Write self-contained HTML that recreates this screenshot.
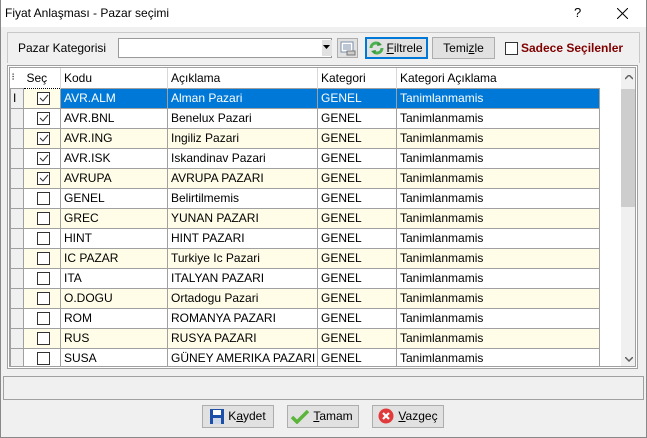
<!DOCTYPE html><html><head><meta charset="utf-8"><style>
*{box-sizing:border-box;margin:0;padding:0}
body{width:647px;height:438px;background:#f0f0f0;font-family:"Liberation Sans",Arial,sans-serif;font-size:12px;color:#000;position:relative;overflow:hidden}
.a{position:absolute}
.win{left:0;top:0;width:647px;height:438px;border:1px solid #888;border-top:none}
.title{left:1px;top:0;width:645px;height:27px;background:#fff}
.btn{background:#e1e1e1;border:1px solid #adadad;text-align:center;line-height:20px;font-size:12px}
.cb{width:13px;height:13px;border:1px solid #333;background:#fff}
table{border-collapse:collapse;table-layout:fixed}
td{height:20px;border:1px solid #a0a0a0;padding:0 3px;white-space:nowrap;overflow:hidden;font-size:12px}
tr.y td{background:#fffde8}
tr.w td{background:#fff}
td.ind{background:#f0f0f0!important}
tr.sel td{background:#0078d7;color:#fff}
</style></head><body>
<div class="a title"></div>
<div class="a" style="left:5px;top:6px;font-size:12px">Fiyat Anlaşması - Pazar seçimi</div>
<div class="a" style="left:574px;top:5px;font-size:13px">?</div>
<svg class="a" style="left:617px;top:8px" width="11" height="11"><path d="M0 0L11 11M11 0L0 11" stroke="#000" stroke-width="1"/></svg>
<div class="a win"></div>
<div class="a" style="left:7px;top:32px;width:633px;height:31px;border:1px solid #c8c8c8;border-bottom:none"></div>
<div class="a" style="left:18px;top:41px">Pazar Kategorisi</div>
<div class="a" style="left:118px;top:38px;width:214px;height:20px;background:#fff;border:1px solid #999"></div>
<div class="a" style="left:322px;top:40px;width:10px;height:16px;background:#e1e1e1"></div>
<svg class="a" style="left:323px;top:45px" width="8" height="5"><path d="M0 0H7L3.5 4Z" fill="#000"/></svg>
<div class="a" style="left:337px;top:38px;width:21px;height:20px;background:#e1e1e1;border:1px solid #adadad"></div>
<svg class="a" style="left:340px;top:41px" width="16" height="15"><rect x="1" y="1" width="12" height="10" fill="#fff" stroke="#7a8ea8"/><path d="M3 4h8M3 6h8M3 8h8" stroke="#7a8ea8"/><rect x="7" y="10" width="8" height="4" fill="#ccc" stroke="#777"/></svg>
<div class="a btn" style="left:365px;top:37px;width:63px;height:22px;border:2px solid #0078d7;line-height:18px;padding-left:16px">
<u>F</u>iltrele</div>
<svg class="a" style="left:368px;top:40px" width="17" height="16"><path d="M3 8a5 5 0 0 1 9-3" stroke="#4caf50" stroke-width="3" fill="none"/><path d="M14 8a5 5 0 0 1-9 3" stroke="#4caf50" stroke-width="3" fill="none"/><path d="M10 2l4 3-5 1z" fill="#3b9a3f"/><path d="M7 14l-4-3 5-1z" fill="#3b9a3f"/></svg>
<div class="a btn" style="left:432px;top:37px;width:63px;height:22px">Temi<u>z</u>le</div>
<div class="a cb" style="left:505px;top:42px;width:13px;height:13px"></div>
<div class="a" style="left:521px;top:41px;font-weight:bold;color:#800000">Sadece Seçilenler</div>

<div class="a" style="left:7px;top:65px;width:631px;height:304px;border:1px solid #a0a0a0;background:#fff;padding:1px">
<div style="border:1px solid #a0a0a0;width:627px;height:300px;position:relative;overflow:hidden">
<table style="width:589px">
<colgroup><col style="width:13px"><col style="width:37px"><col style="width:107px"><col style="width:150px"><col style="width:79px"><col style="width:203px"></colgroup>
<tr class="w"><td class="ind" style="background:#fff!important;border:none;padding:0 0 0 1px;font-size:10px">⁝</td><td style="border:none;border-right:1px solid #d8d8d8">Seç</td><td style="border:none;border-right:1px solid #d8d8d8">Kodu</td><td style="border:none;border-right:1px solid #d8d8d8">Açıklama</td><td style="border:none;border-right:1px solid #d8d8d8">Kategori</td><td style="border:none">Kategori Açıklama</td></tr>
<tr class="sel"><td class="ind" style="color:#000;padding:0 2px">I</td><td style="background:#fffde8;border:1px dotted #000"><div class="cb" style="margin-left:10px"><svg width="11" height="11" style="display:block"><path d="M2 5l3 3 5-6" stroke="#333" fill="none"/></svg></div></td><td>AVR.ALM</td><td>Alman Pazari</td><td>GENEL</td><td>Tanimlanmamis</td></tr>
<tr class="w"><td class="ind"></td><td><div class="cb" style="margin-left:10px"><svg width="11" height="11" style="display:block"><path d="M2 5l3 3 5-6" stroke="#333" fill="none"/></svg></div></td><td>AVR.BNL</td><td>Benelux Pazari</td><td>GENEL</td><td>Tanimlanmamis</td></tr>
<tr class="y"><td class="ind"></td><td><div class="cb" style="margin-left:10px"><svg width="11" height="11" style="display:block"><path d="M2 5l3 3 5-6" stroke="#333" fill="none"/></svg></div></td><td>AVR.ING</td><td>Ingiliz Pazari</td><td>GENEL</td><td>Tanimlanmamis</td></tr>
<tr class="w"><td class="ind"></td><td><div class="cb" style="margin-left:10px"><svg width="11" height="11" style="display:block"><path d="M2 5l3 3 5-6" stroke="#333" fill="none"/></svg></div></td><td>AVR.ISK</td><td>Iskandinav Pazari</td><td>GENEL</td><td>Tanimlanmamis</td></tr>
<tr class="y"><td class="ind"></td><td><div class="cb" style="margin-left:10px"><svg width="11" height="11" style="display:block"><path d="M2 5l3 3 5-6" stroke="#333" fill="none"/></svg></div></td><td>AVRUPA</td><td>AVRUPA PAZARI</td><td>GENEL</td><td>Tanimlanmamis</td></tr>
<tr class="w"><td class="ind"></td><td><div class="cb" style="margin-left:10px"></div></td><td>GENEL</td><td>Belirtilmemis</td><td>GENEL</td><td>Tanimlanmamis</td></tr>
<tr class="y"><td class="ind"></td><td><div class="cb" style="margin-left:10px"></div></td><td>GREC</td><td>YUNAN PAZARI</td><td>GENEL</td><td>Tanimlanmamis</td></tr>
<tr class="w"><td class="ind"></td><td><div class="cb" style="margin-left:10px"></div></td><td>HINT</td><td>HINT PAZARI</td><td>GENEL</td><td>Tanimlanmamis</td></tr>
<tr class="y"><td class="ind"></td><td><div class="cb" style="margin-left:10px"></div></td><td>IC PAZAR</td><td>Turkiye Ic Pazari</td><td>GENEL</td><td>Tanimlanmamis</td></tr>
<tr class="w"><td class="ind"></td><td><div class="cb" style="margin-left:10px"></div></td><td>ITA</td><td>ITALYAN PAZARI</td><td>GENEL</td><td>Tanimlanmamis</td></tr>
<tr class="y"><td class="ind"></td><td><div class="cb" style="margin-left:10px"></div></td><td>O.DOGU</td><td>Ortadogu Pazari</td><td>GENEL</td><td>Tanimlanmamis</td></tr>
<tr class="w"><td class="ind"></td><td><div class="cb" style="margin-left:10px"></div></td><td>ROM</td><td>ROMANYA PAZARI</td><td>GENEL</td><td>Tanimlanmamis</td></tr>
<tr class="y"><td class="ind"></td><td><div class="cb" style="margin-left:10px"></div></td><td>RUS</td><td>RUSYA PAZARI</td><td>GENEL</td><td>Tanimlanmamis</td></tr>
<tr class="w"><td class="ind"></td><td><div class="cb" style="margin-left:10px"></div></td><td>SUSA</td><td>GÜNEY AMERIKA PAZARI</td><td>GENEL</td><td>Tanimlanmamis</td></tr>
</table>
<div class="a" style="left:611px;top:0;width:16px;height:300px;background:#f0f0f0"></div>
<div class="a" style="left:611px;top:21px;width:16px;height:118px;background:#cdcdcd"></div>
<svg class="a" style="left:615px;top:7px" width="8" height="5"><path d="M0 4L4 0L8 4" stroke="#606060" fill="none" stroke-width="1.5"/></svg>
<svg class="a" style="left:615px;top:289px" width="8" height="5"><path d="M0 0L4 4L8 0" stroke="#606060" fill="none" stroke-width="1.5"/></svg>
</div></div>

<div class="a" style="left:3px;top:376px;width:641px;height:24px;border:1px solid #a0a0a0"></div>
<div class="a btn" style="left:202px;top:405px;width:72px;height:23px;padding-left:18px">K<u>a</u>ydet</div>
<svg class="a" style="left:210px;top:409px" width="14" height="15"><rect x="0" y="0" width="14" height="15" fill="#1c4fa8"/><rect x="3" y="1" width="8" height="5" fill="#fff"/><rect x="3" y="9" width="8" height="6" fill="#cfd8e8"/></svg>
<div class="a btn" style="left:287px;top:405px;width:72px;height:23px;padding-left:20px"><u>T</u>amam</div>
<svg class="a" style="left:291px;top:410px" width="18" height="14"><path d="M1 7l5 5 11-11" stroke="#5bb53a" stroke-width="3.5" fill="none"/></svg>
<div class="a btn" style="left:372px;top:405px;width:72px;height:23px;padding-left:20px"><u>V</u>azgeç</div>
<svg class="a" style="left:378px;top:408px" width="16" height="16"><circle cx="8" cy="8" r="7.5" fill="#e23a3a"/><path d="M5 5l6 6M11 5l-6 6" stroke="#fff" stroke-width="2.2"/></svg>
</body></html>
